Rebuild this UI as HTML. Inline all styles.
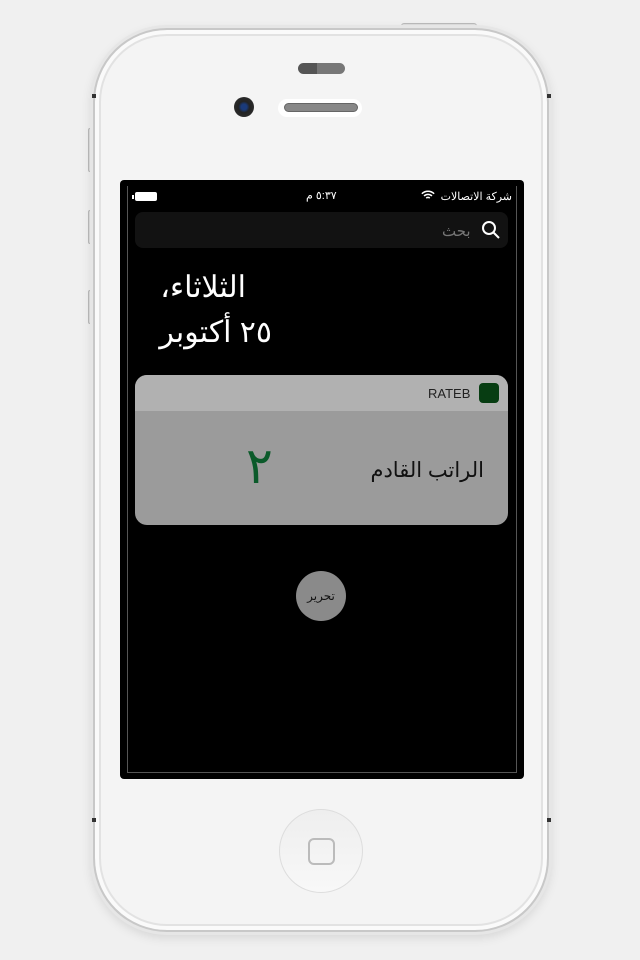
<!DOCTYPE html>
<html><head><meta charset="utf-8"><style>
body{margin:0;width:640px;height:960px;background:#f0f0f0;position:relative;overflow:hidden;font-family:"Liberation Sans","Noto Sans CJK SC",sans-serif}
.a{position:absolute}
.phone{left:93px;top:28px;width:456px;height:904px;border-radius:74px;background:#f4f4f4;border:2px solid #c8c8c8;box-sizing:border-box;box-shadow:0 0 0 3px #e6e6e6,0 4px 12px rgba(0,0,0,.15), inset 0 0 0 4px #fafafa, inset 0 0 0 6px #e2e2e2}
.screen{left:120px;top:180px;width:404px;height:599px;background:#000;border-radius:4px}
.inner{left:127px;top:186px;width:390px;height:587px;border:1px solid #555;border-top:none;box-sizing:border-box}
</style></head><body>
<div class="a" style="left:401px;top:23px;width:74px;height:6px;background:#ddd;border:1px solid #bbb;border-radius:3px 3px 0 0"></div>
<div class="a" style="left:88px;top:128px;width:5px;height:42px;background:#ddd;border:1px solid #bbb;border-radius:2px"></div>
<div class="a" style="left:88px;top:210px;width:5px;height:32px;background:#ddd;border:1px solid #bbb;border-radius:2px"></div>
<div class="a" style="left:88px;top:290px;width:5px;height:32px;background:#ddd;border:1px solid #bbb;border-radius:2px"></div>
<div class="a phone"></div>
<div class="a" style="left:92px;top:94px;width:4px;height:4px;background:#333"></div>
<div class="a" style="left:547px;top:94px;width:4px;height:4px;background:#333"></div>
<div class="a" style="left:92px;top:818px;width:4px;height:4px;background:#333"></div>
<div class="a" style="left:547px;top:818px;width:4px;height:4px;background:#333"></div>
<div class="a" style="left:298px;top:63px;width:47px;height:11px;border-radius:6px;background:linear-gradient(90deg,#555 40%,#777 40%)"></div>
<div class="a" style="left:234px;top:97px;width:20px;height:20px;border-radius:50%;background:radial-gradient(circle,#1a3a7a 20%,#222 40%,#333 100%)"></div>
<div class="a" style="left:278px;top:99px;width:84px;height:18px;border-radius:9px;background:#fff"></div>
<div class="a" style="left:284px;top:103px;width:74px;height:9px;border-radius:5px;background:#888;border:1px solid #666;box-sizing:border-box"></div>
<div class="a screen"></div>
<div class="a inner"></div>
<div class="a" style="left:135px;top:192px;width:22px;height:9px;border:1px solid #fff;border-radius:2px;background:#fff;box-sizing:border-box"></div>
<div class="a" style="left:132px;top:195px;width:2px;height:4px;background:#fff"></div>
<div class="a" style="left:306px;top:189px;color:#fff;font-size:11px;direction:rtl">٥:٣٧ م</div>
<div class="a" style="left:421px;top:190px;color:#fff;font-size:12px"><svg width="14" height="11" viewBox="0 0 16 12"><path d="M1 4a10 10 0 0 1 14 0M3.5 6.5a6.5 6.5 0 0 1 9 0M6 9a3 3 0 0 1 4 0" stroke="#fff" stroke-width="1.8" fill="none"/></svg></div>
<div class="a" style="left:438px;top:190px;width:74px;text-align:right;color:#fff;font-size:11px;direction:rtl;white-space:nowrap">شركة الاتصالات</div>
<div class="a" style="left:135px;top:212px;width:373px;height:36px;background:#121212;border-radius:8px"></div>
<svg class="a" style="left:481px;top:220px" width="20" height="20" viewBox="0 0 20 20"><circle cx="8" cy="8" r="6" stroke="#fff" stroke-width="2" fill="none"/><path d="M12.5 12.5L18 18" stroke="#fff" stroke-width="2"/></svg>
<div class="a" style="left:442px;top:222px;color:#777;font-size:15px">بحث</div>
<div class="a" style="left:100px;top:266px;width:146px;text-align:right;color:#fff;font-size:30px;direction:rtl;line-height:44px;white-space:nowrap">الثلاثاء،</div>
<div class="a" style="left:100px;top:311px;width:172px;text-align:right;color:#fff;font-size:30px;direction:rtl;line-height:44px;white-space:nowrap">٢٥ أكتوبر</div>
<div class="a" style="left:135px;top:375px;width:373px;height:150px;background:#9b9b9b;border-radius:12px;overflow:hidden"><div style="height:36px;background:#b1b1b1"></div></div>
<div class="a" style="left:479px;top:383px;width:20px;height:20px;background:#073d12;border-radius:4px"></div>
<div class="a" style="left:428px;top:386px;color:#222;font-size:13px">RATEB</div>
<div class="a" style="left:246px;top:436px;color:#0b5a2a;font-size:50px;line-height:60px">٢</div>
<div class="a" style="left:350px;top:458px;width:134px;text-align:right;color:#111;font-size:21px;direction:rtl;white-space:nowrap">الراتب القادم</div>
<div class="a" style="left:296px;top:571px;width:50px;height:50px;border-radius:50%;background:#8a8a8a;color:#111;font-size:12px;text-align:center;line-height:50px">تحرير</div>
<div class="a" style="left:279px;top:809px;width:84px;height:84px;border-radius:50%;background:linear-gradient(#eee,#f8f8f8);border:1px solid #ddd;box-sizing:border-box"></div>
<div class="a" style="left:308px;top:838px;width:27px;height:27px;border-radius:6px;border:2px solid #bbb;box-sizing:border-box"></div>
</body></html>
